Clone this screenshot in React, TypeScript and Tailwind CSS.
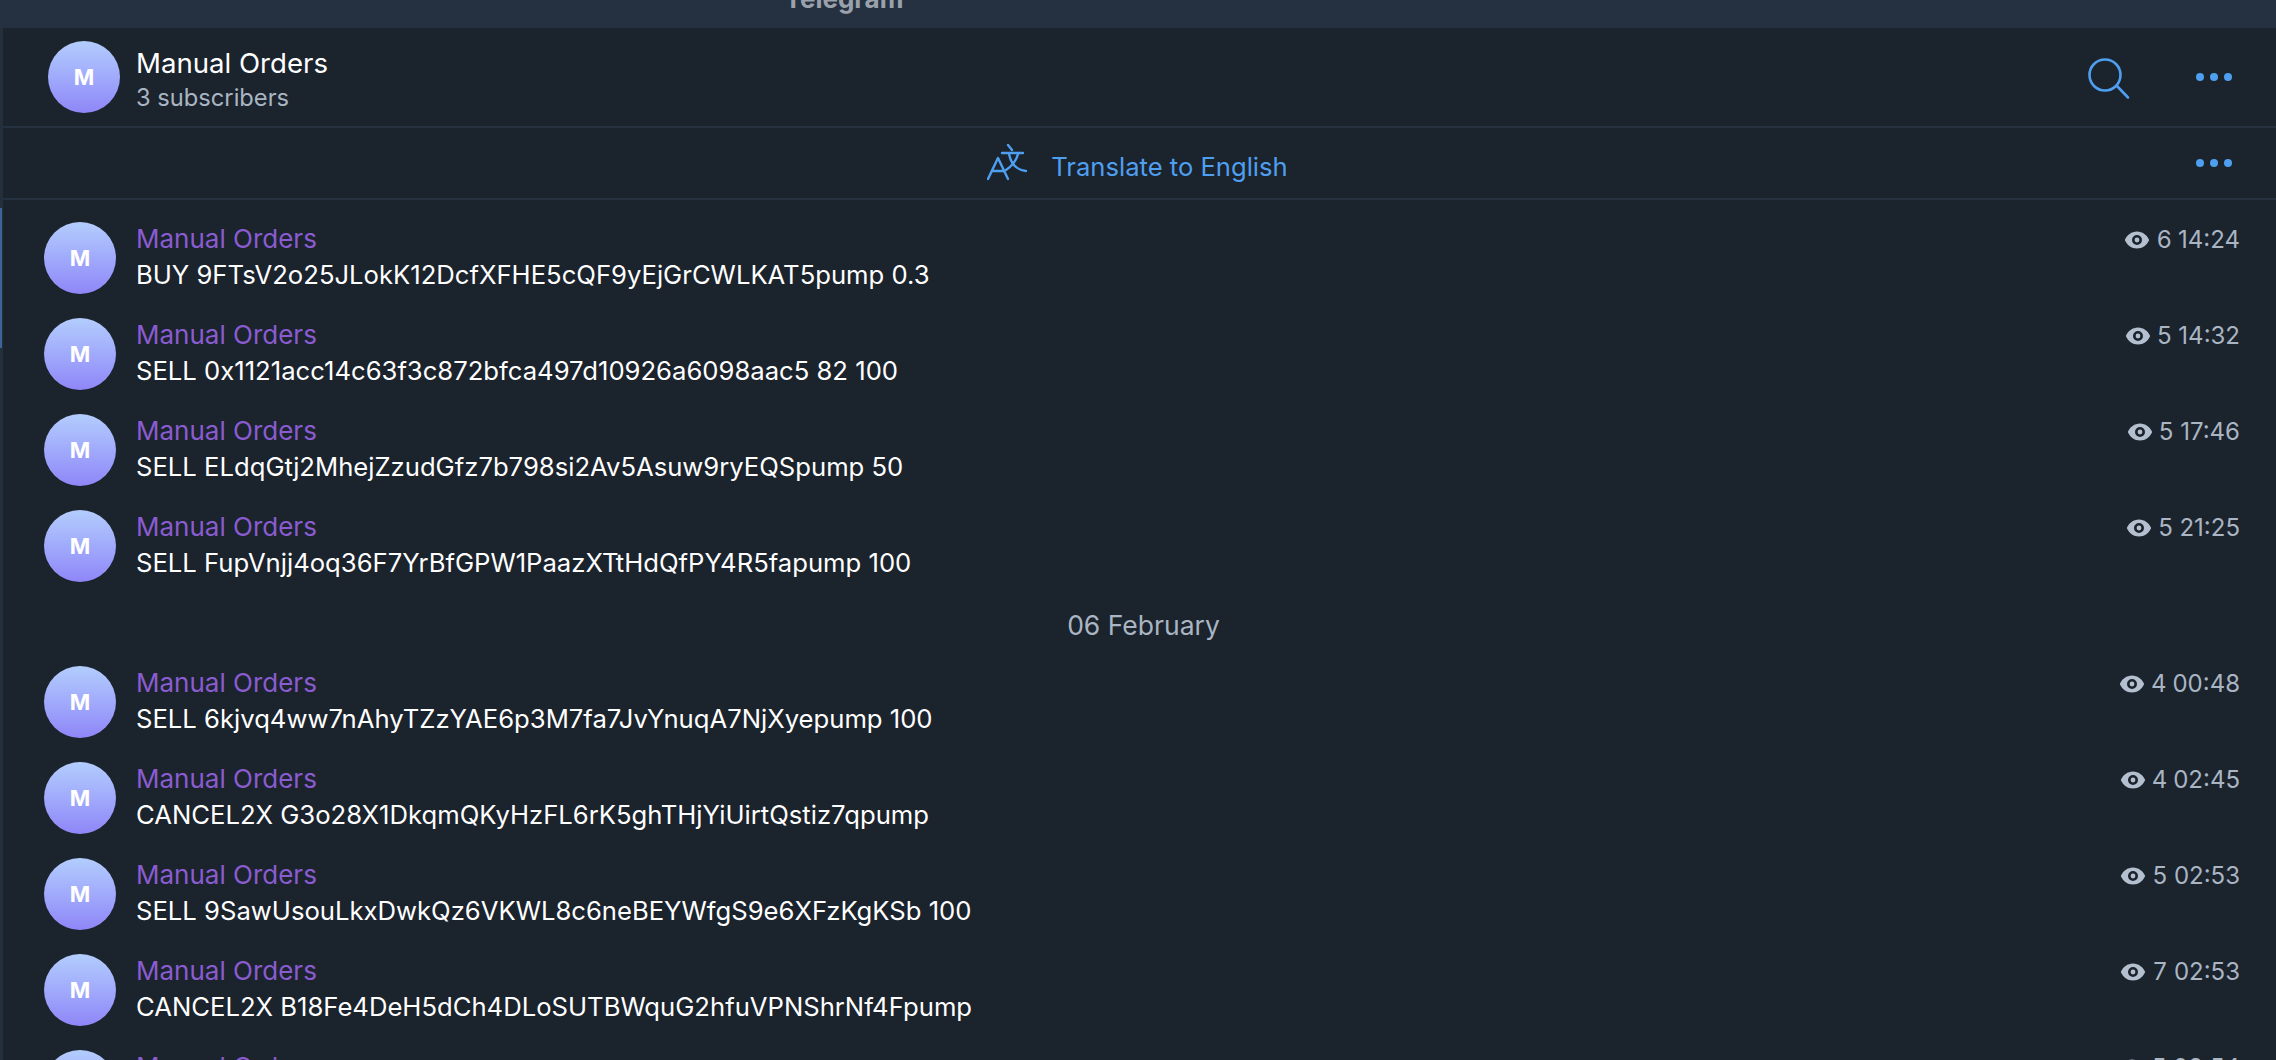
const font = { fontFamily: 'Inter, "Noto Sans", sans-serif' };

function Avatar() {
  return (
    <div className="flex h-[72px] w-[72px] shrink-0 items-center justify-center rounded-full bg-gradient-to-b from-[#b3cdfd] to-[#8f86f8] text-[22px] font-bold text-white">
      M
    </div>
  );
}

function Dots() {
  return (
    <div className="flex gap-[6px]">
      <span className="h-2 w-2 rounded-full bg-[#4f9ff0]" />
      <span className="h-2 w-2 rounded-full bg-[#4f9ff0]" />
      <span className="h-2 w-2 rounded-full bg-[#4f9ff0]" />
    </div>
  );
}

function Eye() {
  return (
    <svg width="26" height="18" viewBox="0 0 26 18" className="shrink-0">
      <path
        fillRule="evenodd"
        fill="#b4c0cf"
        d="M13 0.5C7.5 0.5 3 4 0.8 9 3 14 7.5 17.5 13 17.5S23 14 25.2 9C23 4 18.5 0.5 13 0.5ZM13 14a5 5 0 1 1 0-10 5 5 0 0 1 0 10Zm0-2.6a2.4 2.4 0 1 0 0-4.8 2.4 2.4 0 0 0 0 4.8Z"
      />
    </svg>
  );
}

function SearchIcon() {
  return (
    <svg width="42" height="42" viewBox="0 0 42 42" fill="none" stroke="#4f9ff0" strokeWidth="2.6" strokeLinecap="round" className="mr-[66px] mt-[4px] shrink-0">
      <circle cx="17" cy="17" r="15.5" />
      <path d="M29 28l11 11.5" />
    </svg>
  );
}

function TranslateIcon() {
  return (
    <svg width="40" height="38" viewBox="0 0 40 38" fill="none" stroke="#4f9ff0" strokeWidth="2.4" strokeLinecap="round" strokeLinejoin="round">
      <path d="M1 35 11 14l10 21" />
      <path d="M5 27h12" />
      <path d="M21 1l4 5" />
      <path d="M15 9h21" />
      <path d="M22 10c2 10 8 16 17 17" />
      <path d="M31 10c-2 8-6 12-12 16" />
    </svg>
  );
}

function Row({ text, views, time }: { text: string; views: number; time: string }) {
  return (
    <div className="flex h-[96px] pl-[41px] pr-[36px] pt-[22px]">
      <Avatar />
      <div className="ml-[20px] min-w-0 flex-1">
        <div className="text-[26px] leading-[34px] text-[#8a5cd0]">Manual Orders</div>
        <div className="mt-[1px] text-[25.65px] leading-[36px] text-white">{text}</div>
      </div>
      <div className="flex h-[36px] items-center gap-[6px] text-[24px] text-[#a9b5c3]">
        <Eye />
        <span className="tabular-nums">{views}</span>
        <span>{time}</span>
      </div>
    </div>
  );
}

const before = [
  { text: 'BUY 9FTsV2o25JLokK12DcfXFHE5cQF9yEjGrCWLKAT5pump 0.3', views: 6, time: '14:24' },
  { text: 'SELL 0x1121acc14c63f3c872bfca497d10926a6098aac5 82 100', views: 5, time: '14:32' },
  { text: 'SELL ELdqGtj2MhejZzudGfz7b798si2Av5Asuw9ryEQSpump 50', views: 5, time: '17:46' },
  { text: 'SELL FupVnjj4oq36F7YrBfGPW1PaazXTtHdQfPY4R5fapump 100', views: 5, time: '21:25' },
];

const after = [
  { text: 'SELL 6kjvq4ww7nAhyTZzYAE6p3M7fa7JvYnuqA7NjXyepump 100', views: 4, time: '00:48' },
  { text: 'CANCEL2X G3o28X1DkqmQKyHzFL6rK5ghTHjYiUirtQstiz7qpump', views: 4, time: '02:45' },
  { text: 'SELL 9SawUsouLkxDwkQz6VKWL8c6neBEYWfgS9e6XFzKgKSb 100', views: 5, time: '02:53' },
  { text: 'CANCEL2X B18Fe4DeH5dCh4DLoSUTBWquG2hfuVPNShrNf4Fpump', views: 7, time: '02:53' },
  { text: '', views: 5, time: '03:54' },
];

export default function App() {
  return (
    <div className="flex h-[1060px] w-[2276px] flex-col overflow-hidden bg-[#1b232d]" style={font}>
      <div className="flex h-[28px] shrink-0 items-end justify-center overflow-hidden bg-[#253141] pr-[588px]">
        <span className="mb-[16px] text-[26px] font-bold leading-[26px] text-[#9aa1ab]">Telegram</span>
      </div>
      <div className="flex min-h-0 flex-1">
        <div className="flex w-[3px] shrink-0 flex-col bg-[#242f3c]">
          <div className="mt-[180px] h-[140px] w-[2px] bg-[#3d6496]" />
        </div>
        <div className="min-w-0 flex-1">
          <div className="flex h-[100px] items-center border-b-2 border-[#253141] pl-[45px] pr-[44px]">
            <Avatar />
            <div className="ml-[16px] flex-1 pt-[4px]">
              <div className="text-[27.6px] leading-[36px] text-white">Manual Orders</div>
              <div className="mt-[1px] text-[23.7px] leading-[32px] text-[#a9b5c3]">3 subscribers</div>
            </div>
            <SearchIcon />
            <Dots />
          </div>
          <div className="relative flex h-[72px] items-center justify-center border-b-2 border-[#253141] pr-[4px] text-[#4f9ff0]">
            <TranslateIcon />
            <span className="ml-[24px] mt-[8px] text-[25.6px]">Translate to English</span>
            <div className="absolute right-[44px]">
              <Dots />
            </div>
          </div>
          <div>
            {before.map((m) => (
              <Row key={m.time} {...m} />
            ))}
          </div>
          <div className="flex h-[60px] items-center justify-center pl-[8px] pt-[24px] text-[26.5px] text-[#a9b5c3]">06 February</div>
          <div>
            {after.map((m, i) => (
              <Row key={i} {...m} />
            ))}
          </div>
        </div>
      </div>
    </div>
  );
}
